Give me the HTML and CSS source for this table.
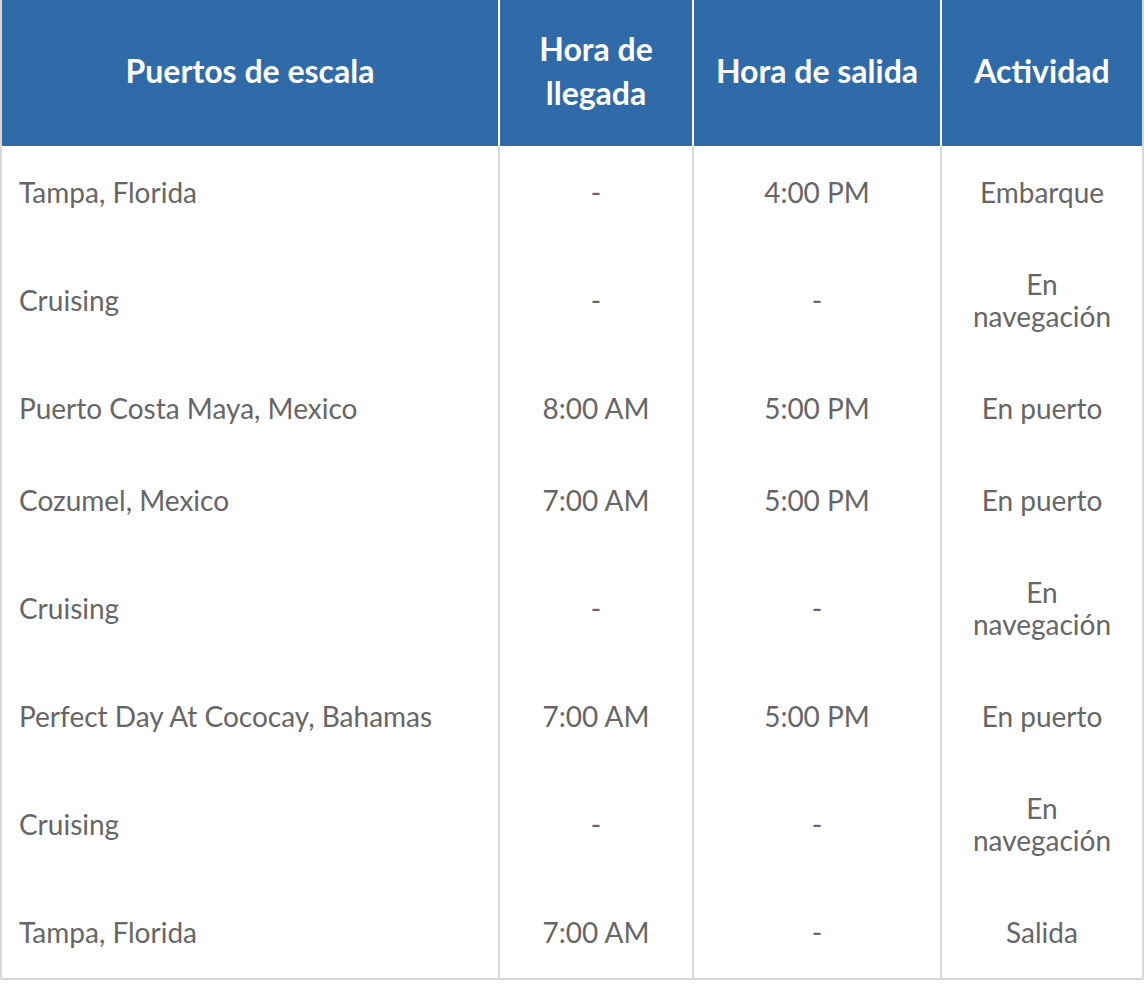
FILE: index.html
```html
<!DOCTYPE html>
<html lang="es">
<head>
<meta charset="utf-8">
<title>Itinerario</title>
<link rel="stylesheet" href="styles.css">
</head>
<body>
<table class="itinerary">
  <colgroup>
    <col class="c-port">
    <col class="c-arr">
    <col class="c-dep">
    <col class="c-act">
  </colgroup>
  <thead>
    <tr>
      <th>Puertos de escala</th>
      <th>Hora de<br>llegada</th>
      <th>Hora de salida</th>
      <th>Actividad</th>
    </tr>
  </thead>
  <tbody>
    <tr><td>Tampa, Florida</td><td>-</td><td>4:00 PM</td><td>Embarque</td></tr>
    <tr><td>Cruising</td><td>-</td><td>-</td><td>En<br>navegacio&#769;n</td></tr>
    <tr><td>Puerto Costa Maya, Mexico</td><td>8:00 AM</td><td>5:00 PM</td><td>En puerto</td></tr>
    <tr><td>Cozumel, Mexico</td><td>7:00 AM</td><td>5:00 PM</td><td>En puerto</td></tr>
    <tr><td>Cruising</td><td>-</td><td>-</td><td>En<br>navegacio&#769;n</td></tr>
    <tr><td>Perfect Day At Cococay, Bahamas</td><td>7:00 AM</td><td>5:00 PM</td><td>En puerto</td></tr>
    <tr><td>Cruising</td><td>-</td><td>-</td><td>En<br>navegacio&#769;n</td></tr>
    <tr><td>Tampa, Florida</td><td>7:00 AM</td><td>-</td><td>Salida</td></tr>
  </tbody>
</table>
</body>
</html>
```
FILE: styles.css
```css
html, body {
  margin: 0;
  padding: 0;
  background: #ffffff;
}

.itinerary {
  width: 1142px;
  border-collapse: separate;
  border-spacing: 0;
  table-layout: fixed;
  font-family: Lato, "Liberation Sans", sans-serif;
  border-left: 2px solid #dadada;
  border-right: 2px solid #dadada;
  border-bottom: 2px solid #d6d6d6;
}

.c-port { width: 498px; }
.c-arr { width: 194px; }
.c-dep { width: 248px; }
.c-act { width: 200px; }

.itinerary th {
  background: #2f6aa9;
  color: #ffffff;
  font-weight: 700;
  font-size: 32px;
  line-height: 44px;
  height: 146px;
  box-sizing: border-box;
  padding: 0 4px 4px;
  text-align: center;
  vertical-align: middle;
  border-right: 2px solid #ffffff;
}

.itinerary th:last-child {
  border-right: none;
}

.itinerary td {
  color: #666666;
  font-size: 28px;
  line-height: 32px;
  padding: 30px 4px;
  text-align: center;
  vertical-align: middle;
  border-right: 2px solid #dadada;
}

.itinerary td:first-child {
  text-align: left;
  padding-left: 17px;
}

.itinerary td:last-child {
  border-right: none;
}
```
